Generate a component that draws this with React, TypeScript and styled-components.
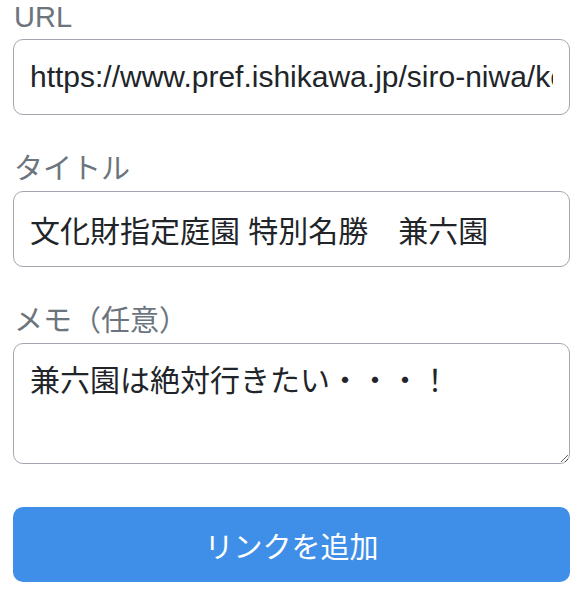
import React from "react";
import styled, { createGlobalStyle } from "styled-components";

const GlobalStyle = createGlobalStyle`
  html, body {
    margin: 0;
    padding: 0;
    background: #ffffff;
  }
  body {
    font-family: "Liberation Sans", "Noto Sans CJK JP", sans-serif;
  }
  * { box-sizing: border-box; }
`;

const Form = styled.form`
  display: flex;
  flex-direction: column;
  gap: 37px;
  padding: 0 13px;
  font-family: "Liberation Sans", "Noto Sans CJK JP", sans-serif;
`;

const Field = styled.div`
  display: flex;
  flex-direction: column;
`;

const Label = styled.label`
  font-size: 29px;
  line-height: 35px;
  color: #6c757d;
  margin-bottom: 4px;
  padding-left: 1px;
`;

const inputBase = `
  width: 100%;
  font-family: "Liberation Sans", "Noto Sans CJK JP", sans-serif;
  font-size: 30px;
  color: #212529;
  background: #ffffff;
  border: 1px solid #a2a6ae;
  border-radius: 10px;
  outline: none;
`;

const TextInput = styled.input`
  ${inputBase}
  height: 76px;
  padding: 0 16px;
  line-height: 1.5;
`;

const TextArea = styled.textarea`
  ${inputBase}
  display: block;
  height: 121px;
  padding: 14px 16px;
  line-height: 1.5;
  resize: vertical;
`;

const SubmitButton = styled.button`
  margin-top: 6px;
  height: 75px;
  width: 100%;
  border: none;
  border-radius: 10px;
  background: #3f8fe8;
  color: #ffffff;
  font-family: "Liberation Sans", "Noto Sans CJK JP", sans-serif;
  font-size: 29px;
  cursor: pointer;
`;

export default function App() {
  return (
    <>
      <GlobalStyle />
      <Form onSubmit={(e) => e.preventDefault()}>
        <Field>
          <Label htmlFor="url">URL</Label>
          <TextInput
            id="url"
            type="text"
            defaultValue="https://www.pref.ishikawa.jp/siro-niwa/kenrokuen/"
          />
        </Field>
        <Field>
          <Label htmlFor="title">タイトル</Label>
          <TextInput
            id="title"
            type="text"
            defaultValue="文化財指定庭園 特別名勝　兼六園"
          />
        </Field>
        <Field>
          <Label htmlFor="memo">メモ（任意）</Label>
          <TextArea id="memo" defaultValue="兼六園は絶対行きたい・・・！" />
        </Field>
        <SubmitButton type="submit">リンクを追加</SubmitButton>
      </Form>
    </>
  );
}
